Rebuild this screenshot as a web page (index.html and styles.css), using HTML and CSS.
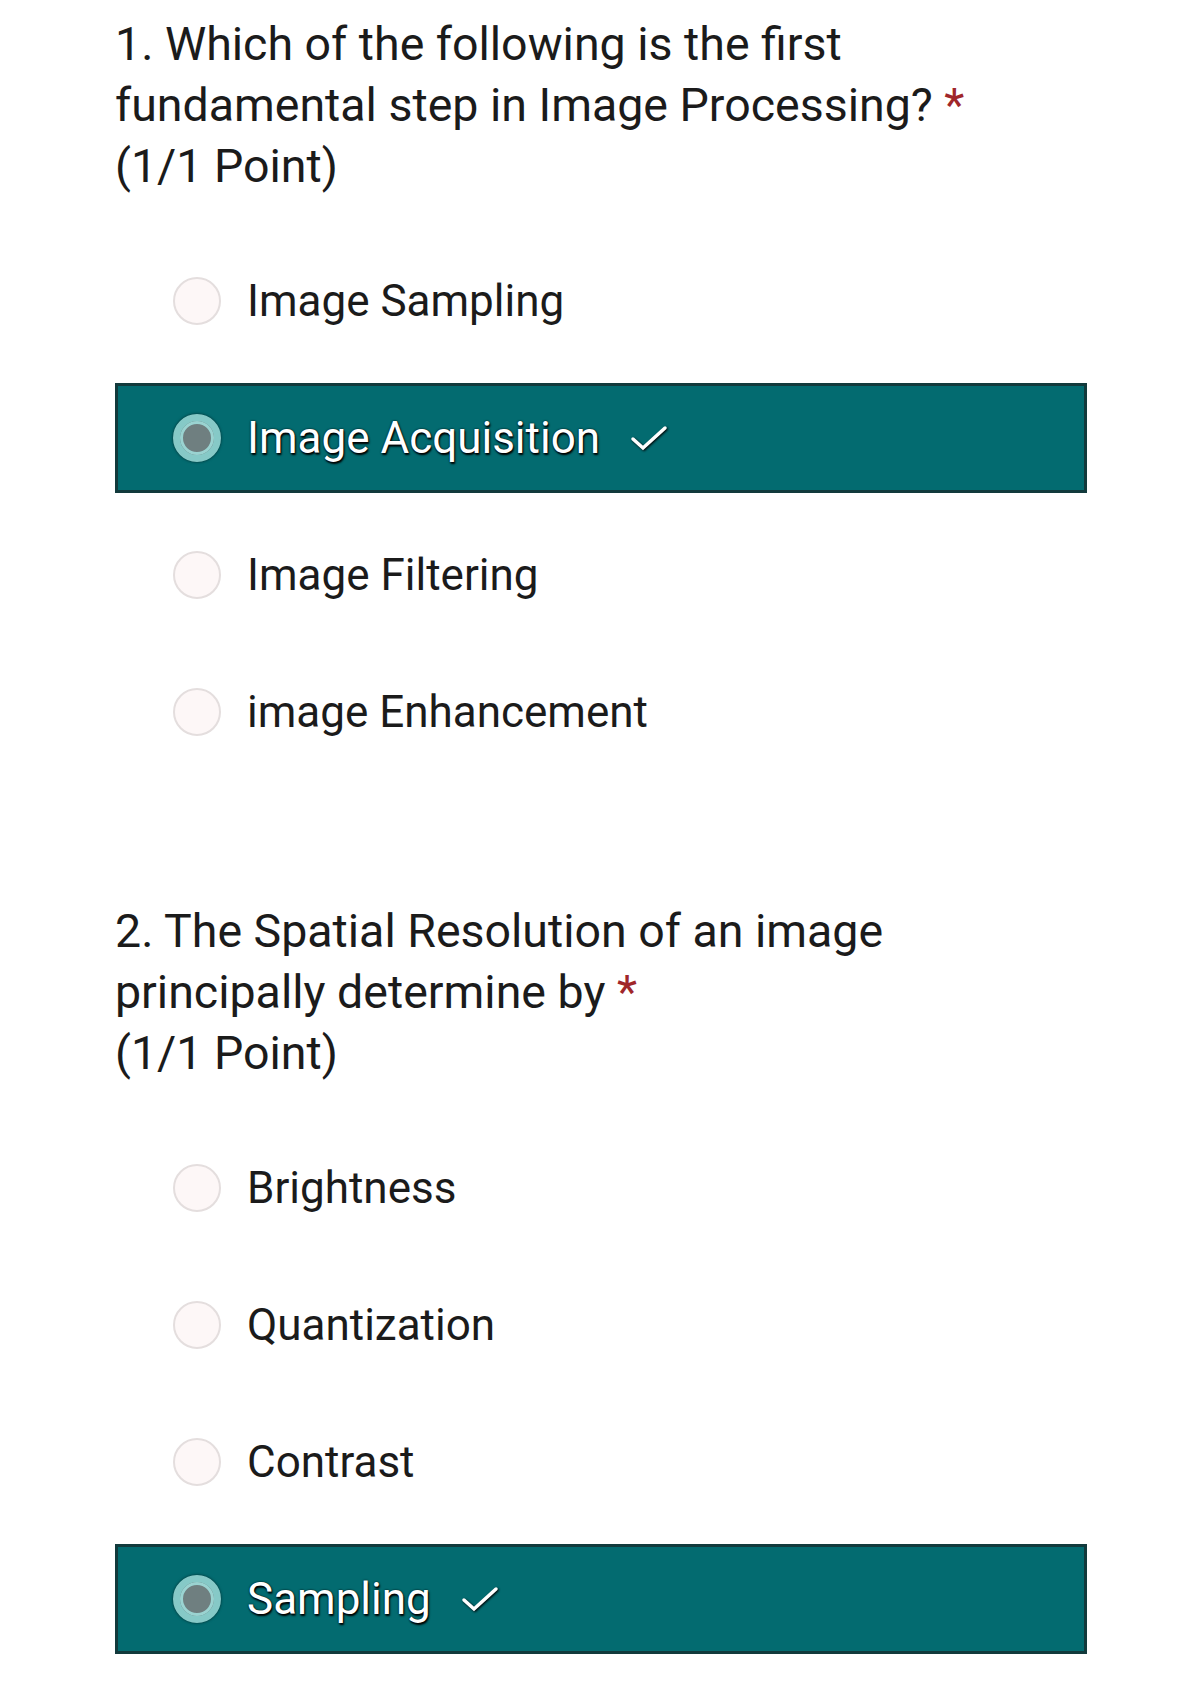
FILE: index.html
```html
<!DOCTYPE html>
<html lang="en">
<head>
    <meta charset="UTF-8">
    <meta name="viewport" content="width=device-width, initial-scale=1.0">
    <title>Image Processing Quiz</title>
    <link rel="stylesheet" href="styles.css">
</head>
<body>
    <div class="quiz">
        <div class="question">
            <div class="title">1. Which of the following is the first fundamental step in Image Processing? <span class="req">*</span><br>(1/1 Point)</div>
            <div class="options">
                <div class="option">
                    <span class="radio"></span>
                    <span class="label">Image Sampling</span>
                </div>
                <div class="option selected">
                    <span class="radio"></span>
                    <span class="label">Image Acquisition</span>
                    <svg class="check" viewBox="0 0 38 28"><path d="M3 15 L13 24 L35 4"/></svg>
                </div>
                <div class="option">
                    <span class="radio"></span>
                    <span class="label">Image Filtering</span>
                </div>
                <div class="option">
                    <span class="radio"></span>
                    <span class="label">image Enhancement</span>
                </div>
            </div>
        </div>

        <div class="question second">
            <div class="title">2. The Spatial Resolution of an image principally determine by <span class="req">*</span><br>(1/1 Point)</div>
            <div class="options">
                <div class="option">
                    <span class="radio"></span>
                    <span class="label">Brightness</span>
                </div>
                <div class="option">
                    <span class="radio"></span>
                    <span class="label">Quantization</span>
                </div>
                <div class="option">
                    <span class="radio"></span>
                    <span class="label">Contrast</span>
                </div>
                <div class="option selected">
                    <span class="radio"></span>
                    <span class="label">Sampling</span>
                    <svg class="check" viewBox="0 0 38 28"><path d="M3 15 L13 24 L35 4"/></svg>
                </div>
            </div>
        </div>
    </div>
</body>
</html>
```

FILE: styles.css
```css
body {
    margin: 0;
    background: #fff;
    font-family: Roboto, "Liberation Sans", sans-serif;
    color: #1b1b1b;
}
.quiz {
    width: 972px;
    margin-left: 115px;
    padding-top: 14px;
}
.question.second {
    margin-top: 120px;
}
.title {
    font-size: 46.5px;
    line-height: 61px;
    width: 900px;
}
.req {
    color: #a0262a;
}
.options {
    margin-top: 35px;
    padding: 14px 0;
    display: flex;
    flex-direction: column;
    gap: 27px;
}
.option {
    height: 110px;
    display: flex;
    align-items: center;
    padding-left: 58px;
    box-sizing: border-box;
}
.radio {
    width: 48px;
    height: 48px;
    border-radius: 50%;
    border: 2px solid #e4dede;
    background: #fdf7f7;
    box-sizing: border-box;
    flex-shrink: 0;
}
.label {
    font-size: 44px;
    margin-left: 26px;
}
.option.selected {
    background: #036b70;
    border: 3px solid #123a3c;
    padding-left: 55px;
}
.option.selected .radio {
    border: 7px solid #86c9c7;
    background: #6f7f80;
    box-shadow: 0 0 3px rgba(0, 0, 0, 0.6), inset 0 0 0 3px #9ad3d1;
}
.option.selected .label {
    color: #fff;
    text-shadow: 0 0 2px #000, 1px 2px 2px #000;
}
.check {
    width: 38px;
    height: 28px;
    margin-left: 30px;
    flex-shrink: 0;
    fill: none;
    stroke: #fff;
    stroke-width: 3.5;
    stroke-linecap: round;
    filter: drop-shadow(1px 1px 1px #000);
}
```
